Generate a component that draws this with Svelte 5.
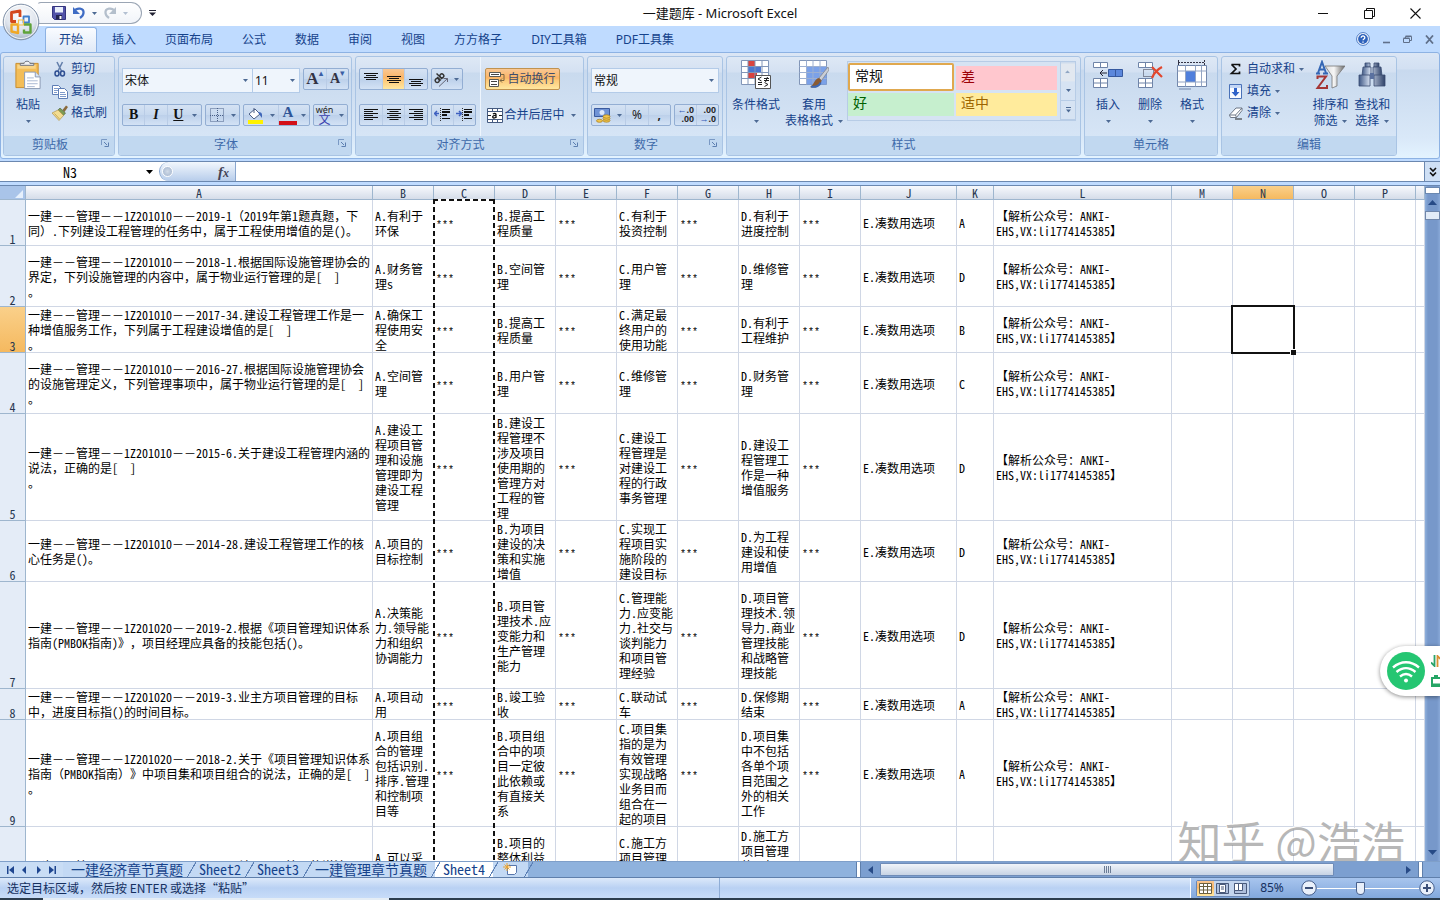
<script>
  const sheetCols = [
    ['A', 347], ['B', 61], ['C', 61], ['D', 61], ['E', 61], ['F', 61], ['G', 61], ['H', 61], ['I', 61],
    ['J', 96], ['K', 37], ['L', 178], ['M', 61], ['N', 61], ['O', 61], ['P', 61], ['', 0]
  ];
  const S = '***';
  const E = 'E.凑数用选项';
  const L = '【解析公众号：ANKI-|EHS,VX:li1774145385】';

  const entries = [
    [46, '一建－－管理－－1Z201010－－2019-1（2019年第1题真题，下|同）.下列建设工程管理的任务中，属于工程使用增值的是()。',
      'A.有利于|环保', 'B.提高工|程质量', 'C.有利于|投资控制', 'D.有利于|进度控制', 'A'],
    [61, '一建－－管理－－1Z201010－－2018-1.根据国际设施管理协会的|界定，下列设施管理的内容中，属于物业运行管理的是[  ]|。',
      'A.财务管|理s', 'B.空间管|理', 'C.用户管|理', 'D.维修管|理', 'D'],
    [46, '一建－－管理－－1Z201010－－2017-34.建设工程管理工作是一|种增值服务工作，下列属于工程建设增值的是[  ]|。',
      'A.确保工|程使用安|全', 'B.提高工|程质量', 'C.满足最|终用户的|使用功能', 'D.有利于|工程维护', 'B'],
    [61, '一建－－管理－－1Z201010－－2016-27.根据国际设施管理协会|的设施管理定义，下列管理事项中，属于物业运行管理的是[  ]|。',
      'A.空间管|理', 'B.用户管|理', 'C.维修管|理', 'D.财务管|理', 'C'],
    [107, '一建－－管理－－1Z201010－－2015-6.关于建设工程管理内涵的|说法，正确的是[  ]|。',
      'A.建设工|程项目管|理和设施|管理即为|建设工程|管理', 'B.建设工|程管理不|涉及项目|使用期的|管理方对|工程的管|理',
      'C.建设工|程管理是|对建设工|程的行政|事务管理', 'D.建设工|程管理工|作是一种|增值服务', 'D'],
    [61, '一建－－管理－－1Z201010－－2014-28.建设工程管理工作的核|心任务是()。',
      'A.项目的|目标控制', 'B.为项目|建设的决|策和实施|增值', 'C.实现工|程项目实|施阶段的|建设目标', 'D.为工程|建设和使|用增值', 'D'],
    [107, '一建－－管理－－1Z201020－－2019-2.根据《项目管理知识体系|指南(PMBOK指南)》，项目经理应具备的技能包括()。',
      'A.决策能|力.领导能|力和组织|协调能力', 'B.项目管|理技术.应|变能力和|生产管理|能力',
      'C.管理能|力.应变能|力.社交与|谈判能力|和项目管|理经验', 'D.项目管|理技术.领|导力.商业|管理技能|和战略管|理技能', 'D'],
    [31, '一建－－管理－－1Z201020－－2019-3.业主方项目管理的目标|中，进度目标指()的时间目标。',
      'A.项目动|用', 'B.竣工验|收', 'C.联动试|车', 'D.保修期|结束', 'A'],
    [107, '一建－－管理－－1Z201020－－2018-2.关于《项目管理知识体系|指南（PMBOK指南）》中项目集和项目组合的说法，正确的是[  ]|。',
      'A.项目组|合的管理|包括识别.|排序.管理|和控制项|目等', 'B.项目组|合中的项|目一定彼|此依赖或|有直接关|系',
      'C.项目集|指的是为|有效管理|实现战略|业务目而|组合在一|起的项目', 'D.项目集|中不包括|各单个项|目范围之|外的相关|工作', 'A']
  ];

  const rows = entries.map(([h, q, a, b, c, d, ans]) => ({
    h, cells: [q, a, S, b, S, c, S, d, S, E, ans, L, '', '', '', '', '']
  }));
  rows.push({
    h: 107,
    cells: ['一建－－管理－－1Z201020－－2018-3.关于项目管理的说法||', 'A.可以采|||', '', 'B.项目的|整体利益||||', '',
      'C.施工方|项目管理||||', '', 'D.施工方|项目管理|的目标||||', '', '', '', '', '', '', '', '', '']
  });

  const lines = (s) => s.split('|');
  const runs = (s) => (s.match(/[*]+|[\x20-\x7e]+|[^\x20-\x7e]+/g) ?? []).map((t) => ({
    t, star: t[0] === '*', latin: t[0] !== '*' && t.charCodeAt(0) < 127
  }));

  const ribbonTabs = ['开始', '插入', '页面布局', '公式', '数据', '审阅', '视图', '方方格子', 'DIY工具箱', 'PDF工具集'];
  const sheetTabs = ['一建经济章节真题', 'Sheet2', 'Sheet3', '一建管理章节真题', 'Sheet4'];
</script>

{#snippet arrow()}<svg class="arrow" width="5" height="3" viewBox="0 0 5 3" aria-hidden="true"><path d="M0 0h5L2.5 3z" fill="#4d6a94" /></svg>{/snippet}

{#snippet launcher(name)}
  <button class="launcher" aria-label={name}><svg width="8" height="8" viewBox="0 0 8 8"><path d="M.5 6V.5H6" fill="none" stroke="#7a99c4" /><path d="M3 3l3 3M7.500 3.500v4h-4" fill="none" stroke="#5d7fb0" /></svg></button>
{/snippet}

{#snippet bars(kind)}
  <svg width="14" height="16" viewBox="0 0 14 16" stroke="#111" stroke-width="1" fill="none">
    {#if kind === 'top'}<path d="M0 2.500h14M2 4.500h10M0 6.500h14M2 8.500h10" />
    {:else if kind === 'middle'}<path d="M0 5.500h14M2 7.500h10M0 9.500h14M2 11.500h10" />
    {:else if kind === 'bottom'}<path d="M0 8.500h14M2 10.500h10M0 12.500h14M2 14.500h10" />
    {:else if kind === 'left'}<path d="M0 2.500h14M0 4.500h9M0 6.500h14M0 8.500h9M0 10.500h14M0 12.500h9" />
    {:else if kind === 'center'}<path d="M0 2.500h14M2.500 4.500h9M0 6.500h14M2.500 8.500h9M0 10.500h14M2.500 12.500h9" />
    {:else}<path d="M0 2.500h14M5 4.500h9M0 6.500h14M5 8.500h9M0 10.500h14M5 12.500h9" />{/if}
  </svg>
{/snippet}

{#snippet indent(dir)}
  <svg width="17" height="16" viewBox="0 0 17 16" fill="none">
    <path d="M8 2.500h8M8 8.500h5M8 11.500h8" stroke="#111" />
    <path d="M8 5h8" stroke="#111" stroke-width="2" />
    <path d="M8 8h5" stroke="#111" stroke-width="2" />
    <path d="M6.500 1v14" stroke="#333" stroke-dasharray="1 1" />
    {#if dir === 'out'}<path d="M1 6.500h4M3 4L.5 6.500 3 9" stroke="#3d5fc0" stroke-width="1.500" />
    {:else}<path d="M0 6.500h5M3 4l2.500 2.500L3 9" stroke="#3d5fc0" stroke-width="1.500" />{/if}
  </svg>
{/snippet}

<div class="app" lang="zh-CN">
  <header class="titlebar">
    <div class="qat">
      <button aria-label="保存"><svg width="14" height="14" viewBox="0 0 14 14"><path d="M.5.5h13v13h-11l-2-2z" fill="#5152a8" stroke="#34357f" /><path d="M3 1h8v5.500H3z" fill="#e9effb" /><path d="M4 9h6v4.500H4z" fill="#23244f" /><path d="M7.500 10h2v3h-2z" fill="#fff" /></svg></button>
      <button aria-label="撤销"><svg width="14" height="14" viewBox="0 0 14 14"><path d="M2 5.500C5 1 12 2 11.500 7c-.2 2.500-2 4-3.500 5" fill="none" stroke="#3f6cc4" stroke-width="2.300" /><path d="M1 1v7h7z" fill="#3f6cc4" /></svg></button>
      {@render arrow()}
      <button aria-label="恢复"><svg width="14" height="14" viewBox="0 0 14 14"><path d="M12 5.500C9 1 2 2 2.500 7c.2 2.500 2 4 3.500 5" fill="none" stroke="#b4bfcc" stroke-width="2.300" /><path d="M13 1v7H6z" fill="#b4bfcc" /></svg></button>
      <span class="faded">{@render arrow()}</span>
    </div>
    <button class="qat-more" aria-label="自定义快速访问工具栏"><svg width="7" height="6" viewBox="0 0 7 6"><path d="M0 .5h7" stroke="#223" /><path d="M0 2.500h7L3.500 6z" fill="#223" /></svg></button>
    <h1>一建题库 - Microsoft Excel</h1>
    <div class="window-buttons">
      <button aria-label="最小化"><svg width="11" height="11" viewBox="0 0 11 11"><path d="M0 5.500h10" stroke="#111" /></svg></button>
      <button aria-label="还原"><svg width="11" height="11" viewBox="0 0 11 11"><path d="M.5 2.500h8v8h-8zM2.500 2.500v-2h8v8h-2" fill="none" stroke="#111" /></svg></button>
      <button aria-label="关闭"><svg width="11" height="11" viewBox="0 0 11 11"><path d="M.5.5l10 10M10.500.5l-10 10" stroke="#111" stroke-width="1.100" /></svg></button>
    </div>
    <button class="office" aria-label="Office 按钮">
      <svg width="38" height="38" viewBox="0 0 38 38">
        <defs>
          <radialGradient id="orb" cx=".5" cy=".3" r=".75"><stop offset="0" stop-color="#fff" /><stop offset=".6" stop-color="#dde3ec" /><stop offset="1" stop-color="#98a8bd" /></radialGradient>
        </defs>
        <circle cx="19" cy="19" r="17.800" fill="url(#orb)" stroke="#8292a8" />
        <circle cx="19" cy="19" r="16.500" fill="none" stroke="#fff" opacity=".8" />
        <g fill="none" stroke-linejoin="round">
          <path d="M14 18.500H9.500v-9l8.500-1.500v6" stroke="#d3471c" stroke-width="2.800" />
          <path d="M21.500 13.500h5.500v6h-5.500z" stroke="#3f7fcb" stroke-width="1.800" />
          <path d="M22 21.500h6.500v8H22v-3" stroke="#5fa33a" stroke-width="2.400" />
          <path d="M9.500 21.500H16v8.500l-6.500-1.500z" stroke="#f0a826" stroke-width="2.400" />
          <path d="M16.500 17h5v5h-5z" stroke="#f3c04a" stroke-width="1.200" />
        </g>
      </svg>
    </button>
  </header>

  <nav class="ribbon-tabs">
    {#each ribbonTabs as tab, i}<button class:active={i === 0}>{tab}</button>{/each}
    <div class="doc-buttons">
      <button aria-label="帮助"><svg width="14" height="14" viewBox="0 0 14 14"><circle cx="7" cy="7" r="6.400" fill="#fff" stroke="#4a78c2" /><circle cx="7" cy="7" r="4.900" fill="#2e62bb" /><path d="M5.200 5.700c0-2.400 3.700-2.200 3.600 0C8.800 7 7 6.900 7 8.300M7 9.500v1.200" stroke="#fff" stroke-width="1.300" fill="none" /></svg></button>
      <button aria-label="最小化窗口"><svg width="9" height="9" viewBox="0 0 9 9"><path d="M1 7.500h7" stroke="#60708a" stroke-width="1.600" /></svg></button>
      <button aria-label="还原窗口"><svg width="10" height="9" viewBox="0 0 10 9"><path d="M.5 3.500h6v4h-6zM2.500 3.500v-2h6v4h-2M2.500 1h6M.5 3h6" fill="none" stroke="#60708a" /></svg></button>
      <button aria-label="关闭窗口"><svg width="9" height="9" viewBox="0 0 9 9"><path d="M1 .5l7 8M8 .5l-7 8" stroke="#60708a" stroke-width="1.800" /></svg></button>
    </div>
  </nav>

  <section class="ribbon">
    <div class="group g-clip">
      <div class="body">
        <button class="big paste">
          <svg width="28" height="31" viewBox="0 0 28 31"><path d="M1.500 3.500h23v25h-23z" fill="#f3bd57" stroke="#c98d2c" /><path d="M3 5h19v4H3z" fill="#f9d588" /><path d="M6 5.500V3.500h4c0-3 6-3 6 0h4v2z" fill="#eef0f3" stroke="#6b7280" /><path d="M10.500 12.500h11l5 5v12h-16z" fill="#fff" stroke="#8a99b4" /><path d="M21.500 12.500v5h5" fill="#dbe5f4" stroke="#8a99b4" /><path d="M13 18.500h7M13 21.500h11M13 24.500h11M13 27.500h8" stroke="#a9b8d2" /></svg>
          <span>粘贴</span>{@render arrow()}
        </button>
        <div class="stack">
          <button><svg width="16" height="16" viewBox="0 0 16 16" fill="none"><path d="M5 1l4.500 9M10.500 1L6 10" stroke="#6782ad" stroke-width="1.600" /><ellipse cx="5" cy="12.500" rx="2" ry="2.500" stroke="#2f4f92" stroke-width="1.500" /><ellipse cx="10.500" cy="12.500" rx="2" ry="2.500" stroke="#2f4f92" stroke-width="1.500" /></svg>剪切</button>
          <button><svg width="16" height="16" viewBox="0 0 16 16"><path d="M.5 2.500h6l3 3v6h-9z" fill="#fff" stroke="#5d7db5" /><path d="M2 5.500h4M2 7.500h5M2 9.500h3" stroke="#7f9bcb" /><path d="M6.500 5.500h6l3 3v7h-9z" fill="#fff" stroke="#5d7db5" /><path d="M8 9.500h5M8 11.500h6M8 13.500h6" stroke="#7f9bcb" /></svg>复制</button>
          <button><svg width="16" height="16" viewBox="0 0 16 16"><path d="M10.500 5l3.500-4.500 2 1.500-3.500 5z" fill="#8a6a3c" /><path d="M8 3l5.500 5-2 2.500L6 5z" fill="#7d9b52" stroke="#4c5c3c" stroke-width=".6" /><path d="M0 8l6-3 5.500 5.500L7 15.500z" fill="#f3dd92" stroke="#b1934a" stroke-width=".7" /><path d="M2.500 8.500l5 5.500" stroke="#c8a956" /></svg>格式刷</button>
        </div>
      </div>
      <footer>剪贴板{@render launcher('剪贴板')}</footer>
    </div>

    <div class="group g-font">
      <div class="body rows">
        <div class="line">
          <div class="combo joined"><label class="select name"><select aria-label="字体"><option>宋体</option></select>{@render arrow()}</label><label class="select size"><select aria-label="字号"><option>11</option></select>{@render arrow()}</label></div>
          <div class="set">
            <button class="serif big-a" aria-label="增大字号">A<sup>▴</sup></button><button class="serif small-a" aria-label="减小字号">A<sup>▾</sup></button>
          </div>
        </div>
        <div class="line">
          <div class="set w80"><button class="serif">B</button><button class="serif italic">I</button><button class="serif under">U</button><button class="drop" aria-label="下划线样式">{@render arrow()}</button></div>
          <div class="set w35"><button aria-label="边框"><svg width="14" height="14" viewBox="0 0 14 14" fill="none" stroke="#4a6088" stroke-dasharray="1 1"><path d="M.5.5h13v13H.5zM7.500 0v14M0 7.500h14" /></svg></button><button class="drop" aria-label="边框样式">{@render arrow()}</button></div>
          <div class="set w67">
            <button aria-label="填充颜色"><svg width="17" height="17" viewBox="0 0 17 17"><path d="M2 7l6-5 5 5-6 5z" fill="#fff" stroke="#4c5f85" /><path d="M7 6V1" stroke="#4c5f85" /><path d="M11 5c5 0 4 3 4 6l-3-4z" fill="#3f66b8" /><path d="M1 13h15v4H1z" fill="#fff200" /></svg></button><button class="drop" aria-label="填充颜色选择">{@render arrow()}</button>
            <button class="serif font-color" aria-label="字体颜色">A</button><button class="drop" aria-label="字体颜色选择">{@render arrow()}</button>
          </div>
          <div class="set w35"><button class="wen" aria-label="拼音"><small>wén</small><b>文</b></button><button class="drop" aria-label="拼音选项">{@render arrow()}</button></div>
        </div>
      </div>
      <footer>字体{@render launcher('字体')}</footer>
    </div>

    <div class="group g-align">
      <div class="body">
        <div class="rows">
          <div class="line">
            <div class="set w69"><button aria-label="顶端对齐">{@render bars('top')}</button><button class="on" aria-label="垂直居中">{@render bars('middle')}</button><button aria-label="底端对齐">{@render bars('bottom')}</button></div>
            <div class="set w32"><button aria-label="方向"><svg width="16" height="16" viewBox="0 0 16 16" fill="none"><g transform="rotate(-45 6 7)" stroke="#333" stroke-width="1.400"><circle cx="3" cy="7.500" r="2" /><path d="M5.500 5v5M7.500 2v8" /><circle cx="9.500" cy="7.500" r="2" /></g><path d="M6 15.500l8.500-8M14.500 11V7.500h-4" stroke="#667" /></svg></button><button class="drop" aria-label="方向选项">{@render arrow()}</button></div>
          </div>
          <div class="line">
            <div class="set w69"><button aria-label="左对齐">{@render bars('left')}</button><button aria-label="居中">{@render bars('center')}</button><button aria-label="右对齐">{@render bars('right')}</button></div>
            <div class="set w45"><button aria-label="减少缩进">{@render indent('out')}</button><button aria-label="增加缩进">{@render indent('in')}</button></div>
          </div>
        </div>
        <div class="rows wraps">
          <button class="wrap on"><svg width="16" height="15" viewBox="0 0 16 15"><path d="M.5.5h11v4H.5zM.5 7.500h9v7h-9z" fill="#fff" stroke="#5a5a55" /><path d="M2 2.500h8M2 9.500h6M2 12.500h6" stroke="#444" /><path d="M12 2.500h3v6h-4M13 6.500l-2 2 2 2" fill="none" stroke="#7a6540" /></svg>自动换行</button>
          <button class="wrap merge"><svg width="16" height="15" viewBox="0 0 16 15"><path d="M.5.500h15v14H.5z" fill="#fff" stroke="#445a80" /><path d="M.5 3.500h15M.5 11.500h15M5.500.5v3M10.500.5v3M5.500 11.500v3M10.500 11.500v3" stroke="#445a80" /><path d="M1 7.500h3M12 7.500h3" stroke="#222" /><path d="M6 6c1-1 3-1 3 .5v3.500M9 7.500c-4-.5-4 2.500-2 2.500 1 0 2-.7 2-1.500" fill="none" stroke="#111" stroke-width="1.300" /></svg>合并后居中{@render arrow()}</button>
        </div>
      </div>
      <footer>对齐方式{@render launcher('对齐方式')}</footer>
    </div>

    <div class="group g-num">
      <div class="body rows">
        <div class="line"><label class="select format"><select aria-label="数字格式"><option>常规</option></select>{@render arrow()}</label></div>
        <div class="line">
          <div class="set w80"><button aria-label="会计格式"><svg width="17" height="16" viewBox="0 0 17 16"><path d="M.5 1.500h15v8H.5z" fill="#6f93d6" stroke="#3a5a9e" /><circle cx="8" cy="5.500" r="2.500" fill="#dbe7fa" /><g fill="#f2c64d" stroke="#a37b1c" stroke-width=".7"><ellipse cx="12.500" cy="13.500" rx="3.500" ry="1.700" /><ellipse cx="12.500" cy="11.500" rx="3.500" ry="1.700" /><ellipse cx="12.500" cy="9.500" rx="3.500" ry="1.700" /><ellipse cx="5.500" cy="13.800" rx="3" ry="1.500" /></g></svg></button><button class="drop" aria-label="会计格式选项">{@render arrow()}</button><button class="pct">%</button><button class="comma">,</button></div>
          <div class="set w45">
            <button class="dec" aria-label="增加小数位数"><span><i>←</i>.0</span><span>.00</span></button><button class="dec" aria-label="减少小数位数"><span>.00</span><span><i>→</i>.0</span></button>
          </div>
        </div>
      </div>
      <footer>数字{@render launcher('数字')}</footer>
    </div>

    <div class="group g-style">
      <div class="body">
        <button class="big cond">
          <svg width="30" height="30" viewBox="0 0 30 30"><path d="M.5.5h27v24H.5z" fill="#fff" stroke="#8296b8" /><path d="M7 1h7v5H7zM7 13h9v5H7z" fill="#d9443f" /><path d="M7 7h13v5H7z" fill="#4b77cf" /><path d="M.5 6.500h27M.5 12.500h27M.5 18.500h27M7 .5v24M14 .5v24M21 .5v24" stroke="#8296b8" /><path d="M14.500 15.500h15v13h-15z" fill="#fff" stroke="#555" /><path d="M20.500 17l-3.500 2 3.500 2M17 22.500h4M17 24.500h4M23 18.500h5M23 20.500h5M26.500 17l-2 5M23.500 22.500l3.500 2-3.500 2" fill="none" stroke="#222" /></svg>
          <span>条件格式</span>{@render arrow()}
        </button>
        <button class="big fmt">
          <svg width="30" height="30" viewBox="0 0 30 30"><path d="M.5.5h27v24H.5z" fill="#fff" stroke="#8296b8" /><path d="M8 7h19.500v17.500H8z" fill="#7ba1e8" /><path d="M.5 6.500h27M.5 12.500h27M.5 18.500h27M7.500.5v24M14 .5v24M21 .5v24" stroke="#9db0d2" /><path d="M29 7L20 18l2.500 2.500L30 10z" fill="#c9ced6" stroke="#777" stroke-width=".6" /><path d="M20 18c-5 1-4 6-9 9 6 2 11-1 11.500-6.500z" fill="#8a5b33" /><path d="M12 26.500c5 1 9-1 9.500-4" fill="none" stroke="#3c67b4" stroke-width="2" /></svg>
          <span>套用</span><span>表格格式{@render arrow()}</span>
        </button>
        <div class="gallery">
          <div class="swatches"><button class="normal">常规</button><button class="bad">差</button><button class="good">好</button><button class="neutral">适中</button></div>
          <div class="spin"><button aria-label="向上" class="off">{@render arrow()}</button><button aria-label="向下">{@render arrow()}</button><button aria-label="更多" class="more">{@render arrow()}</button></div>
        </div>
      </div>
      <footer>样式</footer>
    </div>

    <div class="group g-cells">
      <div class="body">
        <button class="big"><svg width="30" height="30" viewBox="0 0 30 30" fill="#fff" stroke="#6f84a8"><path d="M.5 2.500h14v5H.5zM7.500 2.500v5M.5 18.500h14v9H.5zM7.500 18.500v9M.5 23h14" /><path d="M15.500 9.500h14v7h-14z" fill="#5b87dc" stroke="#35589f" /><path d="M22.500 9.500v7" stroke="#35589f" /><path d="M14 13H7M10 10l-3 3 3 3" fill="none" stroke="#223" /></svg><span>插入</span>{@render arrow()}</button>
        <button class="big"><svg width="30" height="30" viewBox="0 0 30 30" fill="#fff" stroke="#6f84a8"><path d="M3.500 2.500h14v5h-14zM10.500 2.500v5M3.500 18.500h14v9h-14zM10.500 18.500v9M3.500 23h14" /><path d="M8.500 9.500h10v7h-10z" fill="none" stroke="#334" stroke-dasharray="1 1" /><path d="M17 7c3 3 6 6 10 10M27 7c-4 2-8 6-10 11" fill="none" stroke="#e2472d" stroke-width="2.200" /></svg><span>删除</span>{@render arrow()}</button>
        <button class="big"><svg width="30" height="30" viewBox="0 0 30 30" fill="#fff" stroke="#7287ab"><path d="M1 2.500h26M1.500 0v5M27.500 0v5" stroke="#334" stroke-dasharray="2 1" /><path d="M.5 5.500h29v21h-29z" /><path d="M9 11h9v11H9z" fill="#4f7fdc" stroke="none" /><path d="M.5 11h29M.5 22h29M8.500 5.500v21M18.500 5.500v21M24.500 5.500v21" fill="none" stroke="#93a5c4" /><path d="M2 29h12" fill="none" stroke="#7287ab" /></svg><span>格式</span>{@render arrow()}</button>
      </div>
      <footer>单元格</footer>
    </div>

    <div class="group g-edit">
      <div class="body">
        <div class="stack">
          <button><svg width="14" height="14" viewBox="0 0 14 14"><path d="M2.500 2.500h8v2M2.500 2.500L7 7l-4.500 4.500h8v-2" fill="none" stroke="#111" stroke-width="1.700" /></svg>自动求和{@render arrow()}</button>
          <button><svg width="14" height="15" viewBox="0 0 14 15"><path d="M.5.5h12v14H.5z" fill="#f7faff" stroke="#4a72b8" /><path d="M1 1h11v3H1z" fill="#c3d6f5" /><path d="M5 4h3v4h2.500l-4 4.500-4-4.500H5z" fill="#2e62c9" /></svg>填充{@render arrow()}</button>
          <button><svg width="14" height="14" viewBox="0 0 14 14"><path d="M.5 9L7 2h6v2.500L7.500 11.500h-6z" fill="#fff" stroke="#6c7787" /><path d="M.5 9h6L13 2M6.500 9l1 2.500" fill="none" stroke="#6c7787" /><path d="M6 13h7" stroke="#222" /></svg>清除{@render arrow()}</button>
        </div>
        <button class="big"><svg width="30" height="30" viewBox="0 0 30 30"><defs><linearGradient id="funnel"><stop offset="0" stop-color="#dcdcdc" /><stop offset=".45" stop-color="#f6f6f6" /><stop offset="1" stop-color="#666" /></linearGradient></defs><path d="M10 6h20l-8 10v10l-5 2V16z" fill="url(#funnel)" stroke="#777" stroke-width=".8" /><path d="M1 13.500h4M8 13.500h5M3 13L7 2l4 11M4.500 9.500h5" fill="none" stroke="#3567b5" stroke-width="2" /><path d="M2.500 19v-2.500H11L2.500 28H12v-3" fill="none" stroke="#a43636" stroke-width="2" /></svg><span>排序和</span><span>筛选{@render arrow()}</span></button>
        <button class="big"><svg width="30" height="30" viewBox="0 0 30 30"><defs><linearGradient id="barrel"><stop offset="0" stop-color="#3f5885" /><stop offset=".4" stop-color="#cfdaec" /><stop offset="1" stop-color="#2f4269" /></linearGradient></defs><g fill="url(#barrel)" stroke="#3a4d72" stroke-width=".8"><path d="M8 3h5v4H8zM17 3h5v4h-5z" /><path d="M6 7h8v9H5zM16 7h8l1 9h-9z" /><path d="M2 15h11v11H2zM17 15h11v11H17z" /></g><path d="M13 13h4v6h-4z" fill="#5a71a0" /></svg><span>查找和</span><span>选择{@render arrow()}</span></button>
      </div>
      <footer>编辑</footer>
    </div>
  </section>

  <section class="formula">
    <label class="namebox"><input aria-label="名称框" value="N3" /><svg width="7" height="4" viewBox="0 0 7 4"><path d="M0 0h7L3.500 4z" /></svg></label>
    <div class="fx"><span class="knob"></span><button aria-label="插入函数">f<sub>x</sub></button></div>
    <input class="formula-input" aria-label="编辑栏" />
    <button class="expand" aria-label="展开编辑栏"><svg width="8" height="10" viewBox="0 0 8 10" fill="none" stroke="#111" stroke-width="1.600"><path d="M1 1l3 3 3-3M1 5.500l3 3 3-3" /></svg></button>
  </section>

  <main>
    <div class="grid">
      <table>
        <colgroup><col class="head" />{#each sheetCols as [, w]}<col style:width={w ? `${w}px` : 'auto'} />{/each}</colgroup>
        <thead><tr><th class="corner" aria-label="全选"><svg width="8" height="8" viewBox="0 0 8 8"><path d="M8 0v8H0z" fill="#e6f0fc" /></svg></th>{#each sheetCols as [name]}<th class:selected={name === 'N'}>{name}</th>{/each}</tr></thead>
        <tbody>
          {#each rows as row, r}
            <tr style:height={`${row.h}px`}>
              <th class:selected={r === 2}>{r < 9 ? r + 1 : ''}</th>
              {#each row.cells as cell, c}
                <td class:cursor={r === 2 && c === 13}>{#each lines(cell) as line}<div>{#each runs(line) as run}<span class:latin={run.latin} class:star={run.star}>{run.t}</span>{/each}</div>{/each}</td>
              {/each}
            </tr>
          {/each}
        </tbody>
      </table>
      <div class="marquee"></div>
      <div class="watermark">知乎 @浩浩</div>
    </div>
    <div class="vscroll">
      <span class="split"></span>
      <button aria-label="向上滚动"><svg width="9" height="5" viewBox="0 0 9 5"><path d="M0 5h9L4.500 0z" fill="#274a86" /></svg></button>
      <span class="thumb"></span>
      <button class="down" aria-label="向下滚动"><svg width="9" height="5" viewBox="0 0 9 5"><path d="M0 0h9L4.500 5z" fill="#274a86" /></svg></button>
    </div>
    <aside class="wifi">
      <svg width="38" height="38" viewBox="0 0 38 38"><circle cx="19" cy="19" r="19" fill="#25c672" /><g fill="none" stroke="#fff" stroke-width="2.400"><path d="M6 15.500c8-7 18-7 26 0" /><path d="M9.500 20c6-5.200 13-5.200 19 0" /><path d="M13 24.500c4-3.300 8-3.300 12 0" /></g><circle cx="19" cy="28.500" r="2" fill="#fff" /></svg>
      <div class="stats">
        <svg width="10" height="12" viewBox="0 0 10 12" fill="none" stroke-width="1.800"><path d="M3.500 0v11L0 7.500" stroke="#2aa36b" /><path d="M6.500 12V1L10 4.500" stroke="#d79032" /></svg>
        <svg width="10" height="12" viewBox="0 0 10 12" fill="none" stroke="#25a565" stroke-width="2"><path d="M10 3H1v8h9M3 1h4M1 9.500h9" /></svg>
      </div>
    </aside>
  </main>

  <section class="tabbar">
    <div class="nav">
      <button aria-label="第一张"><svg width="7" height="8" viewBox="0 0 7 8"><path d="M0 0h1.500v8H0zM7 0v8L2 4z" /></svg></button>
      <button aria-label="上一张"><svg width="7" height="8" viewBox="0 0 7 8"><path d="M5 0v8L1 4z" /></svg></button>
      <button aria-label="下一张"><svg width="7" height="8" viewBox="0 0 7 8"><path d="M2 0v8l4-4z" /></svg></button>
      <button aria-label="最后一张"><svg width="7" height="8" viewBox="0 0 7 8"><path d="M5.500 0H7v8H5.500zM0 0v8l5-4z" /></svg></button>
    </div>
    {#each sheetTabs as tab, i}<button class="sheet" class:current={i === 4}>{#each runs(tab) as run}<span class:latin={run.latin}>{run.t}</span>{/each}</button>{/each}
    <button class="sheet new" aria-label="插入工作表"><svg width="15" height="13" viewBox="0 0 15 13"><path d="M4.500 2.500h9v7l-2 2h-7z" fill="#fff" stroke="#5876ac" /><path d="M4 0v8M0 4h8M1.500 1.500l5 5M6.500 1.500l-5 5" stroke="#eda530" /></svg></button>
    <span class="grip"></span>
    <div class="hscroll">
      <button aria-label="向左滚动"><svg width="5" height="8" viewBox="0 0 5 8"><path d="M5 0v8L0 4z" fill="#274a86" /></svg></button>
      <span class="hthumb"><i></i></span>
      <button aria-label="向右滚动"><svg width="5" height="8" viewBox="0 0 5 8"><path d="M0 0v8l5-4z" fill="#274a86" /></svg></button>
    </div>
    <span class="grip"></span>
    <span class="tail"></span>
  </section>

  <footer class="status">
    <p>选定目标区域，然后按 ENTER 或选择“粘贴”</p>
    <div class="zoomer">
      <div class="views">
        <button class="on" aria-label="普通"><svg width="13" height="11" viewBox="0 0 13 11" fill="#fff" stroke="#6b6040"><path d="M.5.5h12v10H.5zM.5 3.500h12M.5 7h12M4.500.5v10M8.500.5v10" /></svg></button>
        <button aria-label="页面布局"><svg width="13" height="11" viewBox="0 0 13 11" fill="#fff" stroke="#48597a"><path d="M.5.5h12v10H.5z" fill="#aebfdc" /><path d="M3.500 1.500h6v8h-6z" /><path d="M5 4h3M5 6h3" /></svg></button>
        <button aria-label="分页预览"><svg width="13" height="11" viewBox="0 0 13 11" fill="#fff" stroke="#48597a"><path d="M.5.5h12v10H.5z" fill="#aebfdc" /><path d="M.5.5h4v7h-4zM4.500.5h4v7h-4z" /></svg></button>
      </div>
      <button class="percent">85%</button>
      <button aria-label="缩小"><svg width="16" height="16" viewBox="0 0 16 16"><circle cx="8" cy="8" r="7.200" fill="#e9f0fb" stroke="#48608c" /><path d="M4 8h8" stroke="#3b4f78" stroke-width="2" /></svg></button>
      <input type="range" min="10" max="190" value="85" aria-label="缩放" />
      <button aria-label="放大"><svg width="16" height="16" viewBox="0 0 16 16"><circle cx="8" cy="8" r="7.200" fill="#e9f0fb" stroke="#48608c" /><path d="M4 8h8M8 4v8" stroke="#3b4f78" stroke-width="2" /></svg></button>
    </div>
  </footer>
  <div class="desk"><span></span></div>
</div>

<style>
  :global(body) { margin: 0; overflow: hidden; }
  .app { height: 100vh; display: flex; flex-direction: column; overflow: hidden; background: #bfdbff; color: #15428b; font: 12px/16px "Noto Sans", "Noto Sans CJK SC", sans-serif; }
  .app * { box-sizing: border-box; }
  button, input, select { font: inherit; color: inherit; background: none; border: 0; padding: 0; margin: 0; border-radius: 0; }
  button { display: flex; align-items: center; justify-content: center; white-space: nowrap; }
  svg { display: block; flex: none; }

  .titlebar { position: relative; flex: none; height: 26px; background: #fff; display: flex; align-items: center; padding-left: 37px; }
  .qat { display: flex; align-items: center; gap: 6px; height: 22px; width: 105px; padding-left: 14px; border: 1px solid #9aa5b4; border-left-color: transparent; border-radius: 4px 11px 11px 0; background: linear-gradient(#fff, #f1f4f9); }
  .faded { opacity: .4; }
  .qat-more { width: 20px; }
  h1 { position: absolute; inset: 0; margin: 0; text-align: center; font-size: 13px; line-height: 26px; font-weight: 400; color: #111; pointer-events: none; }
  .window-buttons { margin-left: auto; display: flex; padding-right: 2px; }
  .window-buttons button { width: 46px; height: 24px; }
  .office { position: absolute; left: 2px; top: 3px; z-index: 2; }

  .ribbon-tabs { flex: none; height: 26px; display: flex; gap: 1px; align-items: flex-end; padding-left: 45px; }
  .ribbon-tabs > button { height: 25px; padding: 0 14px; }
  .ribbon-tabs > .active { background: linear-gradient(#fafcff, #dfe9f7); border: 1px solid #8db2e3; border-bottom: 0; border-radius: 3px 3px 0 0; padding: 0 13px; }
  .doc-buttons { margin-left: auto; display: flex; align-items: center; gap: 12px; height: 26px; padding-right: 6px; }

  .ribbon { flex: none; height: 107px; display: flex; gap: 3px; padding: 3px 2px 2px 2px; background: linear-gradient(#dbe6f5 0, #d2e0f2 16px, #c8d9ee 17px, #d9e8f8 80%, #e3f3ff); border: 1px solid #8db2e3; border-radius: 3px; }
  .group { flex: none; display: flex; flex-direction: column; height: 100px; border: 1px solid #a9c4e4; border-radius: 3px; background: linear-gradient(#dee8f5 0, #d4e1f2 15px, #c9daee 16px, #dae8f8); overflow: hidden; }
  .g-clip { width: 112px; } .g-font { width: 234px; } .g-align { width: 229px; } .g-num { width: 136px; } .g-style { width: 355px; } .g-cells { width: 134px; } .g-edit { width: 176px; }
  .body { flex: 1; display: flex; padding: 0 3px; min-height: 0; }
  .g-cells .body { padding: 0 2px; }
  .group footer { position: relative; flex: none; height: 19px; background: #c1d8f0; text-align: center; line-height: 18px; color: #3e6aaa; }
  .g-clip footer, .g-font footer, .g-align footer, .g-num footer { padding-right: 18px; }
  .launcher { position: absolute; right: 5px; top: 3px; }
  .big { flex-direction: column; justify-content: flex-start; width: 42px; padding-top: 3px; line-height: 16px; }
  .big > svg:first-child { height: 30px; margin-bottom: 7px; }
  .big > .arrow { margin-top: 7px; }
  .big span { display: flex; align-items: center; gap: 5px; }
  .stack { display: flex; flex-direction: column; gap: 6px; padding-top: 4px; margin-left: 3px; }
  .stack button { justify-content: flex-start; height: 16px; gap: 3px; }
  .rows { display: flex; flex-direction: column; justify-content: flex-start; gap: 11px; padding-top: 11px; }
  .line { display: flex; gap: 3px; height: 25px; align-items: flex-start; }
  .combo { display: flex; }
  .select { position: relative; display: flex; align-items: center; height: 25px; background: #eff5fc; border: 1px solid #b3cbe8; color: #111; }
  .select select { appearance: none; width: 100%; height: 100%; padding-left: 2px; outline: 0; }
  .select .arrow { position: absolute; right: 4px; }
  .name { width: 131px; } .size { width: 47px; border-left: 0; } .format { width: 128px; }
  .set { display: flex; height: 22px; border: 1px solid #93aed3; border-radius: 2px; background: linear-gradient(#d5e2f3, #c6d8ee 50%, #bcd0ea 51%, #d3e2f5); }
  .set > button { flex: 1; min-width: 0; }
  .set > .drop { flex: 0 0 12px; }
  .set > button + button:not(.drop) { border-left: 1px solid #b9cce6; }
  .w80 { width: 80px; } .w35 { width: 35px; } .w67 { width: 67px; } .w69 { width: 69px; } .w32 { width: 32px; } .w45 { width: 45px; }
  .serif { font-family: "Liberation Serif", serif; font-weight: 700; font-size: 14px; color: #111; }
  .italic { font-style: italic; } .under { text-decoration: underline; }
  .big-a { font-size: 17px; width: 22px; color: #334; } .small-a { font-size: 14px; width: 22px; color: #334; }
  .serif sup { font-size: 9px; line-height: 9px; align-self: flex-start; color: #3a5fa5; font-family: "DejaVu Sans", sans-serif; }
  .set > .font-color { flex: 0 0 19px; font-size: 15px; line-height: 15px; color: #2f5597; }
  .font-color { box-shadow: inset 0 -4px 0 #d31018; align-items: flex-start; background-clip: content-box; }
  .wen { flex-direction: column; color: #222; }
  .wen small { font-size: 9px; line-height: 9px; } .wen b { font-size: 12px; line-height: 11px; font-weight: 400; color: #3a3fae; }
  .on { background: linear-gradient(#f9c793, #fbb566 45%, #fdc877 55%, #ffe7a0); }
  .wraps { border-left: 1px solid #eef5fd; margin-left: 3px; padding-left: 4px; }
  .wrap { height: 22px; gap: 2px; padding: 0 3px; width: 75px; border: 1px solid #c0924f; border-radius: 2px; margin-bottom: 3px; }
  .wrap.on { color: #404d6c; }
  .merge { width: 92px; border-color: transparent; }
  .merge .arrow { margin-left: 4px; }
  .g-align .body > .rows:first-child { padding-right: 0; width: 118px; }
  .pct, .comma { color: #222; }
  .comma { font-weight: 700; }
  .dec { flex-direction: column; align-items: flex-end; color: #222; font: 700 9px/9px "Liberation Sans", sans-serif; padding-right: 2px; }
  .dec span { display: flex; } .dec i { font-style: normal; color: #3357b5; }
  .cond { width: 52px; } .fmt { width: 60px; margin: 0 3px 0 2px; }
  .gallery { display: flex; height: 60px; margin-top: 4px; border: 1px solid #b7cce6; background: #d6e3f3; }
  .swatches { display: grid; grid-template-columns: 106px 101px; column-gap: 2px; align-content: start; width: 212px; }
  .swatches button { justify-content: flex-start; height: 24px; margin-top: 4px; padding: 0 0 3px 5px; font-size: 14px; line-height: 16px; }
  .swatches .normal { height: 28px; margin: 1px 0 0; background: #fff; color: #111; border: 2px solid #e0a84e; border-radius: 2px; }
  .bad { background: #ffc7ce; color: #9c0006; } .good { background: #c6efce; color: #006100; } .neutral { background: #ffeb9c; color: #9c6500; }
  .swatches .good, .swatches .neutral { margin-top: 2px; height: 23px; }
  .spin { display: grid; grid-template-rows: 1fr 1fr 1fr; width: 15px; border-left: 1px solid #b7cce6; }
  .spin button { border-bottom: 1px solid #b7cce6; }
  .spin .off { opacity: .5; transform: rotate(180deg); background: #eee; }
  .spin .more .arrow { border-top: 1px solid #4d6a94; padding-top: 1px; height: 6px; }
  .g-edit .stack { width: 81px; margin-left: 4px; }
  .g-edit .stack button { gap: 4px; }

  .formula { flex: none; display: flex; height: 21px; margin-top: 2px; border: 1px solid #6b88b0; border-width: 1px 0; background: #fff; color: #000; }
  .namebox { display: flex; align-items: center; width: 159px; padding-right: 6px; background: #fff; }
  .namebox input { flex: 1; min-width: 0; text-align: center; font: 14px/18px "Noto Sans CJK SC", sans-serif; font-feature-settings: "hwid"; padding-right: 6px; }
  .fx { display: flex; align-items: center; justify-content: space-between; width: 77px; padding: 0 6px 0 2px; border: 1px solid #8aa7cf; border-width: 0 1px; border-radius: 10px 0 0 10px; background: linear-gradient(#f2f7fd, #b7cdeb); }
  .knob { width: 11px; height: 11px; border-radius: 50%; background: radial-gradient(#d2dbe8, #9fb2cc); border: 1px solid #fff; }
  .fx button { font: italic 700 15px/16px "Liberation Serif", serif; color: #445; }
  .fx sub { font-size: 12px; line-height: 12px; padding-top: 3px; }
  .formula-input { flex: 1; min-width: 0; background: #fff; }
  .expand { width: 16px; background: #cfe0f5; border-left: 1px solid #6b88b0; }

  main { position: relative; flex: 1; min-height: 0; display: flex; margin-top: 3px; border-top: 1px solid #6b88b0; }
  .grid { position: relative; flex: 1; min-width: 0; overflow: hidden; background: #fff; color: #000; }
  table { width: 100%; table-layout: fixed; border-collapse: separate; border-spacing: 0; }
  .head { width: 26px; }
  th { padding: 0; font: 12px/13px "Noto Sans CJK SC", sans-serif; font-feature-settings: "hwid"; color: #26364f; }
  thead th { height: 14px; background: linear-gradient(#f7f9fd, #d5dde9); border-right: 1px solid #9eb6ce; border-bottom: 1px solid #9eb6ce; }
  .corner { background: #a9c4e9; }
  .corner svg { margin: 2px 2px 0 auto; }
  tbody th { vertical-align: bottom; background: #e4ecf7; border-right: 1px solid #9eb6ce; border-bottom: 1px solid #9eb6ce; }
  th.selected { background: linear-gradient(#fad08a, #f5b95f); }
  td { padding: 0 0 0 2px; vertical-align: middle; overflow: visible; border-right: 1px solid #d0d7e5; border-bottom: 1px solid #d0d7e5; font: 12px/15px "Noto Sans CJK SC", sans-serif; white-space: pre; text-spacing-trim: space-all; }
  td div { height: 15px; }
  .latin { font-feature-settings: "hwid"; }
  .star { font: 10px/15px "Liberation Mono", monospace; }
  .cursor { position: relative; }
  .cursor::before { content: ""; position: absolute; inset: -2px; border: 2px solid #111; }
  .cursor::after { content: ""; position: absolute; right: -3px; bottom: -3px; width: 5px; height: 5px; background: #111; border: 1px solid #fff; border-width: 1px 0 0 1px; }
  .marquee { position: absolute; left: 433px; top: 13px; bottom: 0; width: 62px; background:
    repeating-linear-gradient(#111 0 5px, #fff 5px 8px) left / 2px 100% no-repeat,
    repeating-linear-gradient(#111 0 5px, #fff 5px 8px) right / 2px 100% no-repeat,
    repeating-linear-gradient(90deg, #111 0 5px, #fff 5px 8px) top / 100% 2px no-repeat; }
  .watermark { position: absolute; right: 20px; bottom: -6px; font: 44px/54px "Noto Sans CJK SC", sans-serif; color: rgba(135, 135, 135, .6); text-shadow: -1px -1px 0 #fff; white-space: nowrap; }

  .vscroll { flex: none; width: 15px; display: flex; flex-direction: column; align-items: center; background: linear-gradient(90deg, #8fb0dc, #7798ca 20%, #7798ca 80%, #89a9d8); }
  .split { width: 15px; height: 7px; margin-top: 1px; background: #fff; border: 1px solid #6b88b0; }
  .vscroll button { width: 15px; height: 17px; }
  .thumb { width: 15px; height: 9px; background: #e2ebf7; border: 1px solid #6f86aa; }
  .vscroll .down { margin-top: auto; }
  .wifi { position: absolute; right: 0; bottom: 165px; display: flex; align-items: center; gap: 6px; width: 60px; height: 50px; padding-left: 7px; overflow: hidden; background: #fff; border-radius: 25px 0 0 25px; box-shadow: 0 1px 4px rgba(0, 0, 0, .45); }
  .stats { display: flex; flex-direction: column; gap: 8px; }

  .tabbar { flex: none; display: flex; align-items: stretch; height: 17px; background: #8fb2dd; border-top: 1px solid #7f9fc9; border-bottom: 1px solid #5f7fab; }
  .nav { flex: none; display: flex; width: 63px; padding-left: 3px; background: #c9ddf5; fill: #1f4690; }
  .nav button { width: 14px; }
  .sheet { position: relative; padding: 0 8px; font: 14px/15px "Noto Sans CJK SC", sans-serif; background: #c3d9f4; }
  .sheet::after { content: ""; position: absolute; right: -5px; top: 0; width: 9px; height: 15px; background: linear-gradient(120deg, transparent 47%, #5c80b5 48% 54%, transparent 55%); z-index: 1; }
  .current { background: #fff; }
  .new { padding: 0 10px; }
  .grip { width: 5px; background: #fff; border: 1px solid #5f7fab; border-width: 0 1px; flex: none; }
  .tabbar > .grip:first-of-type { margin-left: auto; }
  .hscroll { flex: 0 1 557px; display: flex; align-items: center; background: #7c9fd0; min-width: 0; padding: 1px 0; }
  .hscroll button { width: 19px; }
  .hthumb { flex: 0 1 454px; height: 13px; display: flex; justify-content: center; align-items: center; margin-right: auto; background: linear-gradient(#f0f4fa, #c7d3e4); border: 1px solid #6f8cb8; border-radius: 1px; }
  .hthumb i { width: 7px; height: 7px; background: repeating-linear-gradient(90deg, #6b7c95 0 1px, transparent 1px 2px); }
  .tail { flex: none; width: 17px; background: #86a9d8; }

  .status { flex: none; height: 20px; display: flex; align-items: stretch; background: linear-gradient(#dce9fa, #b9d1f3 50%, #c8dcf8); color: #15305f; }
  .status p { flex: 0 0 50%; margin: 0; padding-left: 7px; font: 12px/19px "Noto Sans CJK SC", sans-serif; border-right: 1px solid #8fadd6; white-space: nowrap; }
  .zoomer { margin-left: auto; display: flex; align-items: center; padding: 0 5px; border-left: 1px solid #fff; background: linear-gradient(#a8c5ee, #82a8dc); }
  .views { display: flex; width: 54px; height: 17px; border: 1px solid #6987b5; border-radius: 2px; background: #c3d5ee; }
  .views button { flex: 1; }
  .percent { width: 51px; padding-right: 7px; }
  .zoomer input { appearance: none; width: 102px; height: 16px; background: linear-gradient(#fff, #fff) center / 100% 1px no-repeat; }
  .zoomer input::-webkit-slider-thumb { appearance: none; width: 9px; height: 13px; background: #e8effa; border: 1px solid #48608c; border-radius: 1px 1px 5px 5px; }
  .desk { flex: none; height: 2px; background: #2c3d4e; }
  .desk span { display: block; width: 24%; height: 2px; margin-left: 3%; background: #e5edf5; }
</style>
